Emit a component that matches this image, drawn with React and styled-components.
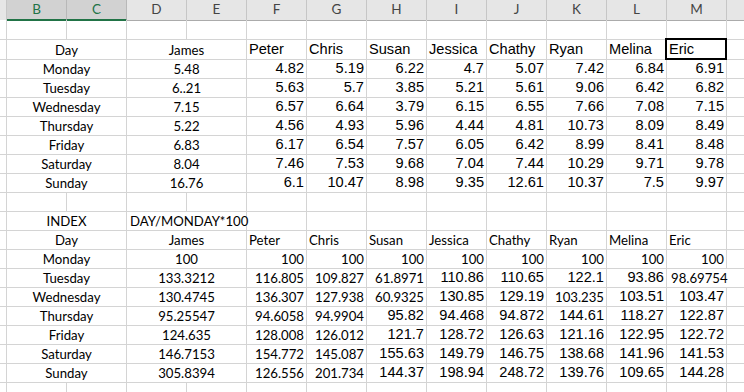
import React from 'react'
import styled, { createGlobalStyle } from 'styled-components'

const CAL = `Lato, "Open Sans", sans-serif`
const ARI = `"Liberation Sans", Arial, sans-serif`
const COLS = ['B', 'C', 'D', 'E', 'F', 'G', 'H', 'I', 'J', 'K', 'L', 'M', 'N']
const NAMES = ['Peter', 'Chris', 'Susan', 'Jessica', 'Chathy', 'Ryan', 'Melina', 'Eric']

const raw = [
    ['Monday', '5.48', '4.82 5.19 6.22 4.7 5.07 7.42 6.84 6.91'],
    ['Tuesday', '6..21', '5.63 5.7 3.85 5.21 5.61 9.06 6.42 6.82'],
    ['Wednesday', '7.15', '6.57 6.64 3.79 6.15 6.55 7.66 7.08 7.15'],
    ['Thursday', '5.22', '4.56 4.93 5.96 4.44 4.81 10.73 8.09 8.49'],
    ['Friday', '6.83', '6.17 6.54 7.57 6.05 6.42 8.99 8.41 8.48'],
    ['Saturday', '8.04', '7.46 7.53 9.68 7.04 7.44 10.29 9.71 9.78'],
    ['Sunday', '16.76', '6.1 10.47 8.98 9.35 12.61 10.37 7.5 9.97'],
]

// fonts per column F..M: c = calibri-ish, a = arial-ish
const index = [
    ['Monday', '100', '100 100 100 100 100 100 100 100', 'cccccccc'],
    ['Tuesday', '133.3212', '116.805 109.827 61.8971 110.86 110.65 122.1 93.86 98.69754', 'cccaaaac'],
    ['Wednesday', '130.4745', '136.307 127.938 60.9325 130.85 129.19 103.235 103.51 103.47', 'cccaacaa'],
    ['Thursday', '95.25547', '94.6058 94.9904 95.82 94.468 94.872 144.61 118.27 122.87', 'ccaaaaaa'],
    ['Friday', '124.635', '128.008 126.012 121.7 128.72 126.63 121.16 122.95 122.72', 'ccaaaaaa'],
    ['Saturday', '146.7153', '154.772 145.087 155.63 149.79 146.75 138.68 141.96 141.53', 'ccaaaaaa'],
    ['Sunday', '305.8394', '126.556 201.734 144.37 198.94 248.72 139.76 109.65 144.28', 'ccaaaaaa'],
]

const GlobalStyle = createGlobalStyle`
    html, body {
        margin: 0;
        padding: 0;
        background: #fff;
        overflow: hidden;
    }
    body {
        width: 744px;
        height: 392px;
    }
`

const Sheet = styled.div`
    width: 744px;
    height: 392px;
    overflow: hidden;
    background: #fff;
`

const Row = styled.div`
    display: grid;
    grid-template-columns: 7px repeat(13, 60px);
    height: ${({ $h }) => $h}px;
`

const Stub = styled.div`
    border-right: 1px solid ${({ $head }) => ($head ? '#c6c6c6' : '#d4d4d4')};
    border-bottom: 1px solid ${({ $head }) => ($head ? '#ababab' : '#d4d4d4')};
    background: ${({ $head }) => ($head ? '#e6e6e6' : '#fff')};
`

const ColHead = styled.div`
    box-sizing: border-box;
    background: ${({ $sel }) => ($sel ? '#d2d2d2' : '#e6e6e6')};
    color: ${({ $sel }) => ($sel ? '#217346' : '#444')};
    border-right: 1px solid ${({ $sel }) => ($sel ? '#b8b8b8' : '#c6c6c6')};
    border-bottom: ${({ $sel }) => ($sel ? '2px solid #217346' : '1px solid #ababab')};
    font-family: ${CAL};
    font-size: 13.5px;
    line-height: 19px;
    text-align: center;
`

const Cell = styled.div`
    position: relative;
    box-sizing: border-box;
    grid-column: span ${({ $span }) => $span || 1};
    border-right: 1px solid #d4d4d4;
    border-bottom: 1px solid #d4d4d4;
    padding: ${({ $font }) => ($font === 'a' ? 0 : 1)}px ${({ $pad }) => $pad ?? 2}px 0;
    font-family: ${({ $font }) => ($font === 'a' ? ARI : CAL)};
    font-size: ${({ $font }) => ($font === 'a' ? '14.6px' : '13.2px')};
    line-height: ${({ $h }) => $h - 2}px;
    text-align: ${({ $align }) => $align || 'left'};
    color: #000;
    white-space: nowrap;

    ${({ $selected }) => $selected && `
        &::after {
            content: '';
            position: absolute;
            top: -2px;
            left: -2px;
            right: -1px;
            bottom: -1px;
            border: 2px solid #000;
            pointer-events: none;
        }
    `}
`

const EmptyRow = ({ h }) => (
    <Row $h={h}>
        <Stub />
        {COLS.map(c => <Cell key={c} $h={h} />)}
    </Row>
)

const App = () => {
    return (
        <Sheet>
            <GlobalStyle />
            <Row $h={20}>
                <Stub $head />
                {COLS.map(c => (
                    <ColHead key={c} $sel={c === 'B' || c === 'C'}>{c === 'N' ? '' : c}</ColHead>
                ))}
            </Row>
            <EmptyRow h={20} />
            <Row $h={20}>
                <Stub />
                <Cell $h={20} $span={2} $align="center">Day</Cell>
                <Cell $h={20} $span={2} $align="center">James</Cell>
                {NAMES.map(n => (
                    <Cell key={n} $h={20} $font="a" $selected={n === 'Eric'}>{n}</Cell>
                ))}
                <Cell $h={20} />
            </Row>
            {raw.map(([day, james, vals]) => (
                <Row key={day} $h={19}>
                    <Stub />
                    <Cell $h={19} $span={2} $align="center">{day}</Cell>
                    <Cell $h={19} $span={2} $align="center">{james}</Cell>
                    {vals.split(' ').map((v, i) => (
                        <Cell key={i} $h={19} $font="a" $align="right">{v}</Cell>
                    ))}
                    <Cell $h={19} />
                </Row>
            ))}
            <EmptyRow h={19} />
            <Row $h={19}>
                <Stub />
                <Cell $h={19} $span={2} $align="center">INDEX</Cell>
                <Cell $h={19} $span={2} $pad={3}>DAY/MONDAY*100</Cell>
                {COLS.slice(4).map(c => <Cell key={c} $h={19} />)}
            </Row>
            <Row $h={19}>
                <Stub />
                <Cell $h={19} $span={2} $align="center">Day</Cell>
                <Cell $h={19} $span={2} $align="center">James</Cell>
                {NAMES.map(n => <Cell key={n} $h={19}>{n}</Cell>)}
                <Cell $h={19} />
            </Row>
            {index.map(([day, james, vals, fonts]) => {
                const list = vals.split(' ')
                const spill = day === 'Tuesday'
                return (
                    <Row key={day} $h={19}>
                        <Stub />
                        <Cell $h={19} $span={2} $align="center">{day}</Cell>
                        <Cell $h={19} $span={2} $align="center">{james}</Cell>
                        {list.map((v, i) => {
                            const last = i === list.length - 1
                            if (spill && last) {
                                return <Cell key={i} $h={19} $span={2} $pad={4} $font={fonts[i]}>{v}</Cell>
                            }
                            return <Cell key={i} $h={19} $font={fonts[i]} $align="right">{v}</Cell>
                        })}
                        {!spill && <Cell $h={19} />}
                    </Row>
                )
            })}
            <EmptyRow h={19} />
        </Sheet>
    )
}

export default App
